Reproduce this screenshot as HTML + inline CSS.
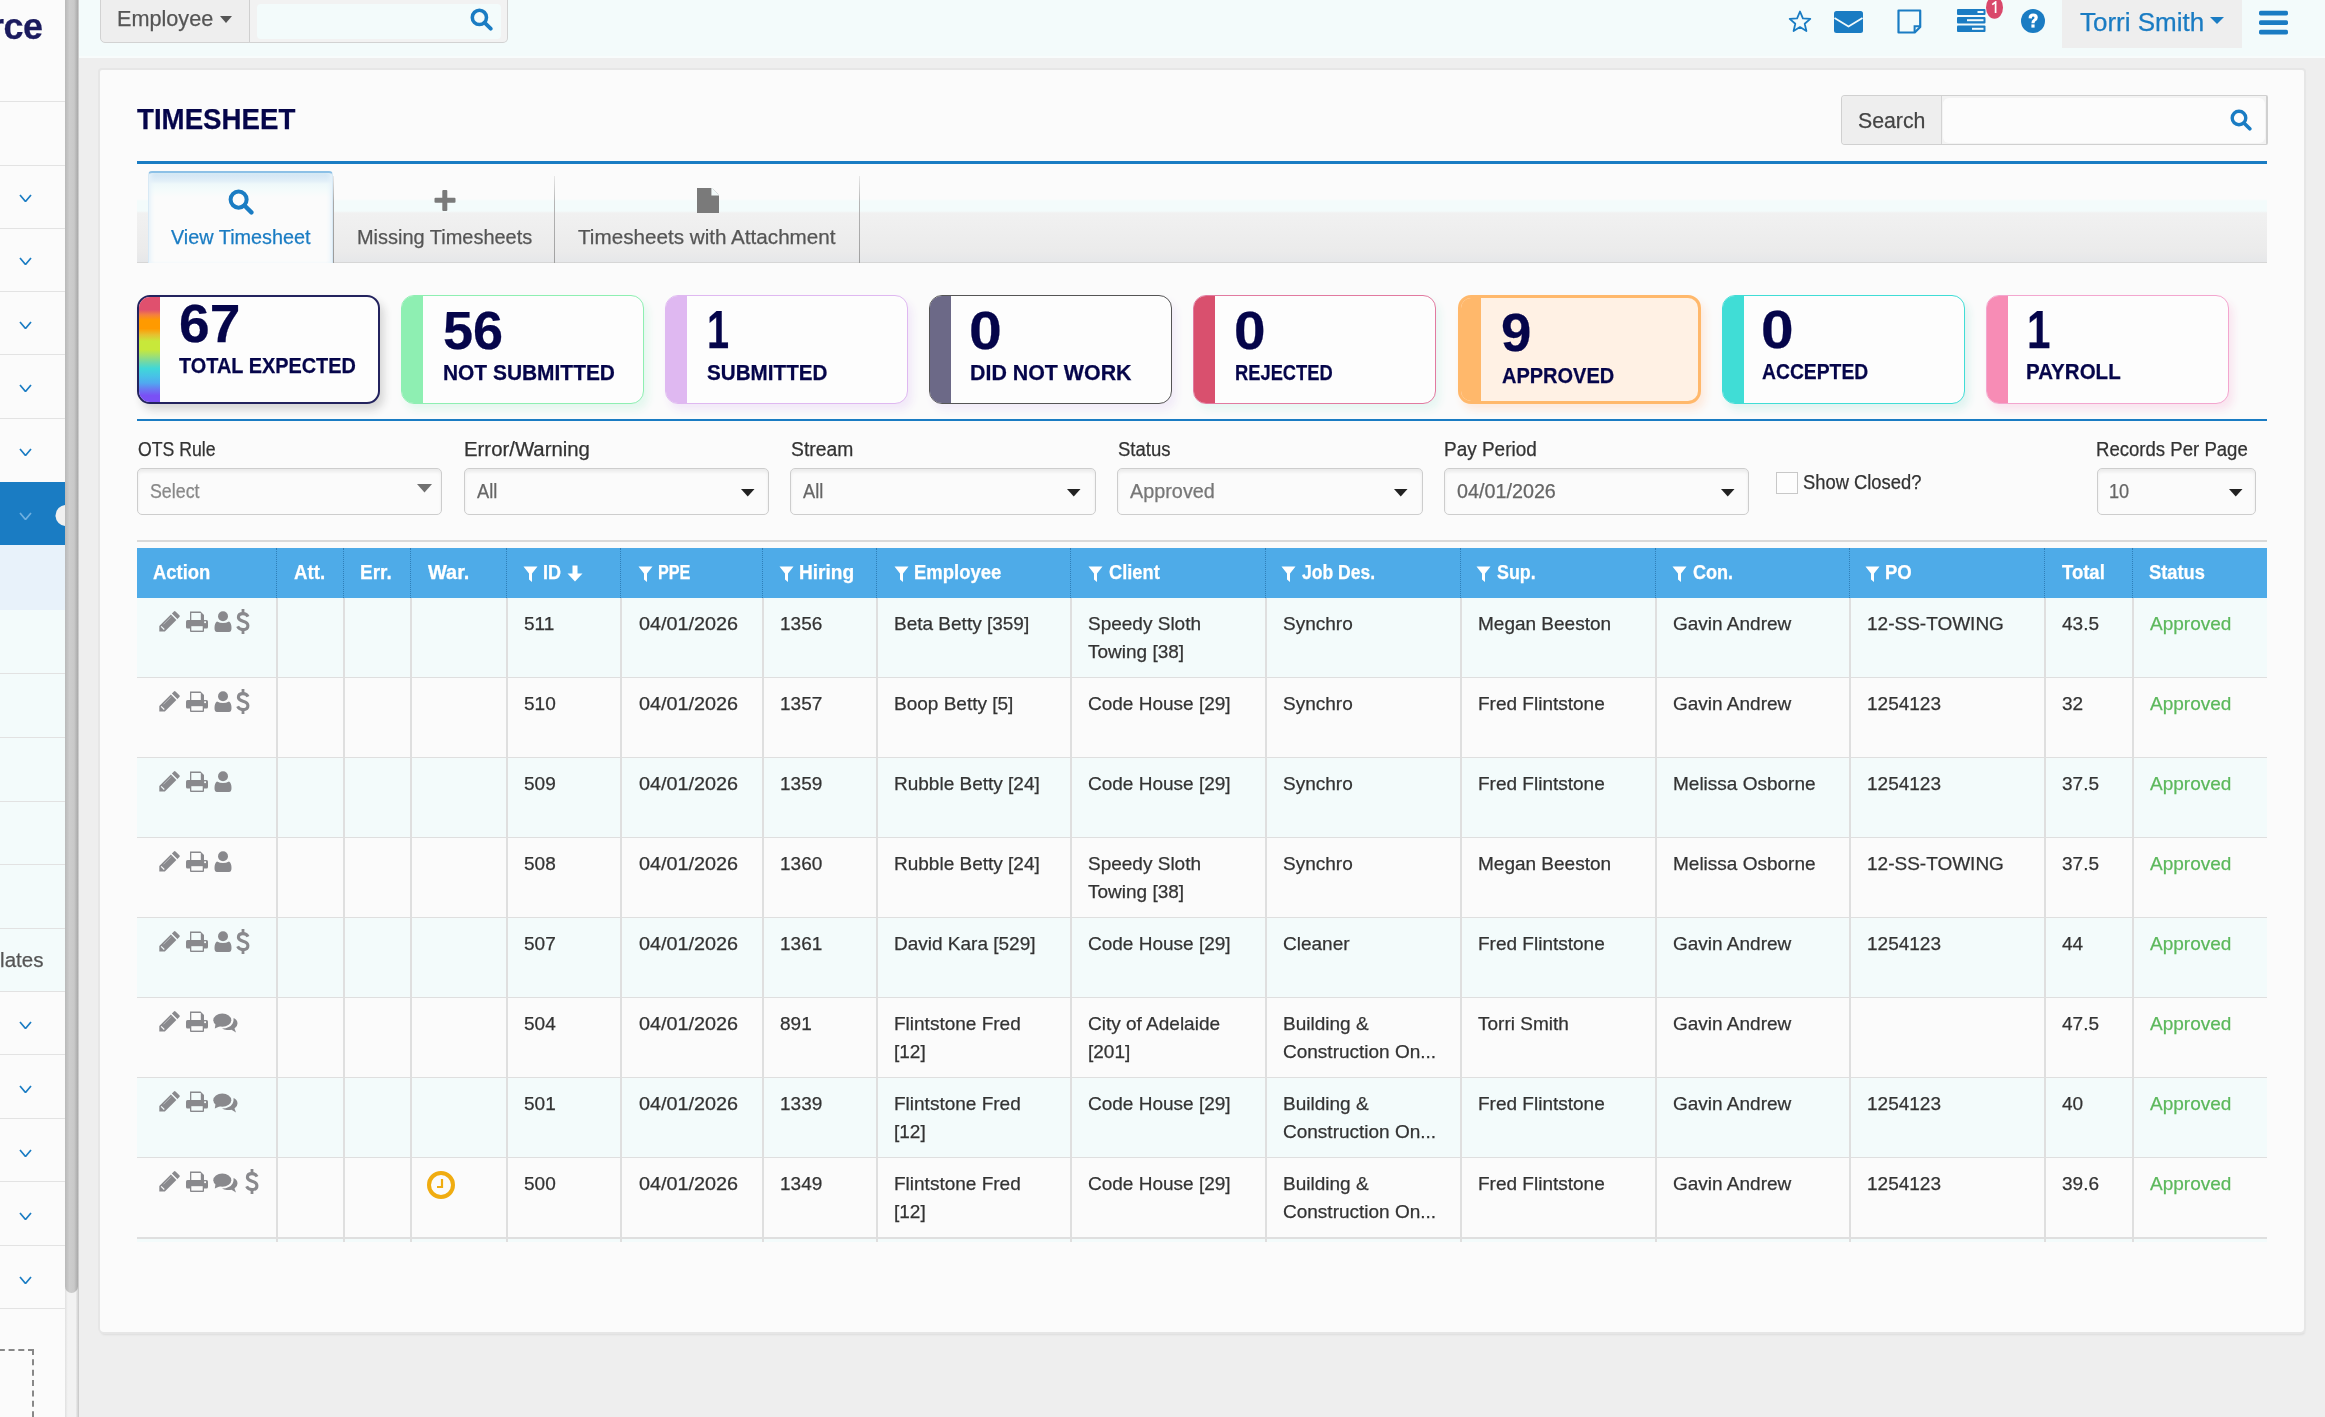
<!DOCTYPE html><html><head><meta charset="utf-8"><style>
html,body{margin:0;padding:0;}
body{width:2325px;height:1417px;overflow:hidden;position:relative;background:#eeeeee;font-family:"Liberation Sans", sans-serif;}
.t{position:absolute;white-space:nowrap;line-height:1;-webkit-text-stroke:0.25px currentColor;}
svg{display:block;}
</style></head><body><div id="w" style="position:absolute;left:0;top:0;width:2325px;height:1417px;will-change:transform;">
<div style="position:absolute;left:0px;top:0px;width:65px;height:1417px;background:#fbfbfb;"></div>
<div class="t" style="left:-10.0px;top:8.5px;font-size:36px;color:#1b1b5e;font-weight:bold;letter-spacing:-0.5px;">rce</div>
<div style="position:absolute;left:0px;top:101px;width:65px;height:1px;background:#e3e3e3;"></div>
<div style="position:absolute;left:0px;top:165px;width:65px;height:1px;background:#e3e3e3;"></div>
<div style="position:absolute;left:0px;top:228px;width:65px;height:1px;background:#e3e3e3;"></div>
<div style="position:absolute;left:0px;top:291px;width:65px;height:1px;background:#e3e3e3;"></div>
<div style="position:absolute;left:0px;top:354px;width:65px;height:1px;background:#e3e3e3;"></div>
<div style="position:absolute;left:0px;top:418px;width:65px;height:1px;background:#e3e3e3;"></div>
<svg style="position:absolute;left:19px;top:193.5px;" width="13" height="8.5" viewBox="-1 -1 13 8.5"><polyline points="0,0 5.5,6.5 11,0" fill="none" stroke="#1a7cc3" stroke-width="1.7"/></svg>
<svg style="position:absolute;left:19px;top:256.5px;" width="13" height="8.5" viewBox="-1 -1 13 8.5"><polyline points="0,0 5.5,6.5 11,0" fill="none" stroke="#1a7cc3" stroke-width="1.7"/></svg>
<svg style="position:absolute;left:19px;top:320.5px;" width="13" height="8.5" viewBox="-1 -1 13 8.5"><polyline points="0,0 5.5,6.5 11,0" fill="none" stroke="#1a7cc3" stroke-width="1.7"/></svg>
<svg style="position:absolute;left:19px;top:383.5px;" width="13" height="8.5" viewBox="-1 -1 13 8.5"><polyline points="0,0 5.5,6.5 11,0" fill="none" stroke="#1a7cc3" stroke-width="1.7"/></svg>
<svg style="position:absolute;left:19px;top:447.5px;" width="13" height="8.5" viewBox="-1 -1 13 8.5"><polyline points="0,0 5.5,6.5 11,0" fill="none" stroke="#1a7cc3" stroke-width="1.7"/></svg>
<div style="position:absolute;left:0px;top:482px;width:65px;height:63px;background:#1a7cc3;"></div>
<svg style="position:absolute;left:19px;top:511.5px;" width="13" height="8.5" viewBox="-1 -1 13 8.5"><polyline points="0,0 5.5,6.5 11,0" fill="none" stroke="#6fb0e0" stroke-width="1.7"/></svg>
<svg style="position:absolute;left:55px;top:505px;" width="10" height="21" viewBox="0 0 10 21"><circle cx="11" cy="10.5" r="10.5" fill="#f0f0f0"/></svg>
<div style="position:absolute;left:0px;top:545px;width:65px;height:65px;background:#e8f2fa;"></div>
<div style="position:absolute;left:0px;top:610px;width:65px;height:382px;background:#f3fbfb;"></div>
<div style="position:absolute;left:0px;top:673px;width:65px;height:1px;background:#e2e2e2;"></div>
<div style="position:absolute;left:0px;top:737px;width:65px;height:1px;background:#e2e2e2;"></div>
<div style="position:absolute;left:0px;top:801px;width:65px;height:1px;background:#e2e2e2;"></div>
<div style="position:absolute;left:0px;top:864px;width:65px;height:1px;background:#e2e2e2;"></div>
<div style="position:absolute;left:0px;top:928px;width:65px;height:1px;background:#e2e2e2;"></div>
<div style="position:absolute;left:0px;top:991px;width:65px;height:1px;background:#e2e2e2;"></div>
<div class="t" style="left:0.1px;top:950.4px;font-size:20.5px;color:#555;font-weight:normal;">lates</div>
<svg style="position:absolute;left:19px;top:1020.5px;" width="13" height="8.5" viewBox="-1 -1 13 8.5"><polyline points="0,0 5.5,6.5 11,0" fill="none" stroke="#1a7cc3" stroke-width="1.7"/></svg>
<svg style="position:absolute;left:19px;top:1084.5px;" width="13" height="8.5" viewBox="-1 -1 13 8.5"><polyline points="0,0 5.5,6.5 11,0" fill="none" stroke="#1a7cc3" stroke-width="1.7"/></svg>
<svg style="position:absolute;left:19px;top:1148.5px;" width="13" height="8.5" viewBox="-1 -1 13 8.5"><polyline points="0,0 5.5,6.5 11,0" fill="none" stroke="#1a7cc3" stroke-width="1.7"/></svg>
<svg style="position:absolute;left:19px;top:1211.5px;" width="13" height="8.5" viewBox="-1 -1 13 8.5"><polyline points="0,0 5.5,6.5 11,0" fill="none" stroke="#1a7cc3" stroke-width="1.7"/></svg>
<svg style="position:absolute;left:19px;top:1275.5px;" width="13" height="8.5" viewBox="-1 -1 13 8.5"><polyline points="0,0 5.5,6.5 11,0" fill="none" stroke="#1a7cc3" stroke-width="1.7"/></svg>
<div style="position:absolute;left:0px;top:1054px;width:65px;height:1px;background:#e3e3e3;"></div>
<div style="position:absolute;left:0px;top:1118px;width:65px;height:1px;background:#e3e3e3;"></div>
<div style="position:absolute;left:0px;top:1181px;width:65px;height:1px;background:#e3e3e3;"></div>
<div style="position:absolute;left:0px;top:1245px;width:65px;height:1px;background:#e3e3e3;"></div>
<div style="position:absolute;left:0px;top:1308px;width:65px;height:1px;background:#e3e3e3;"></div>
<div style="position:absolute;left:-40px;top:1349px;width:74px;height:120px;border-top:2px dashed #888;border-right:2px dashed #888;box-sizing:border-box;"></div>
<div style="position:absolute;left:65px;top:0px;width:14px;height:1417px;background:linear-gradient(90deg,#e0e0e0,#f2f2f2 20%,#f2f2f2 75%,#c6c6c6);"></div>
<div style="position:absolute;left:65px;top:0px;width:13px;height:1293px;background:linear-gradient(90deg,#b9b9b9,#cdcdcd 35%,#c9c9c9 70%,#a9a9a9);border-radius:0 0 7px 7px;"></div>
<div style="position:absolute;left:79px;top:0px;width:2246px;height:58px;background:#f3fbfb;border-bottom:2px solid #f8fcfc;box-sizing:border-box;"></div>
<div style="position:absolute;left:100px;top:-6px;width:150px;height:49px;background:#eeeeee;border:1px solid #d2d2d2;border-radius:0 0 0 5px;box-sizing:border-box;"></div>
<div class="t" style="left:116.7px;top:8.4px;font-size:22px;color:#555;font-weight:normal;transform:scaleX(0.9835);transform-origin:0 0;">Employee</div>
<svg style="position:absolute;left:220px;top:16px;" width="12" height="7" viewBox="0 0 12 7"><polygon points="0,0 12,0 6.0,7" fill="#555"/></svg>
<div style="position:absolute;left:249px;top:-6px;width:259px;height:49px;background:#f2f2f2;border:1px solid #d2d2d2;border-left:1px solid #cfcfcf;border-radius:0 0 5px 0;box-sizing:border-box;"></div>
<div style="position:absolute;left:257px;top:4px;width:244px;height:35px;background:#f3fbfb;border-radius:4px;"></div>
<svg style="position:absolute;left:470px;top:8px;" width="23" height="23" viewBox="0 0 24 24"><circle cx="9.8" cy="9.8" r="7.4" fill="none" stroke="#1a7cc3" stroke-width="3.7"/><line x1="15.2" y1="15.2" x2="21.6" y2="21.6" stroke="#1a7cc3" stroke-width="4" stroke-linecap="round"/></svg>
<svg style="position:absolute;left:1788px;top:10px;" width="24" height="23" viewBox="0 0 24 23"><path d="M12 1.5 L14.9 8.3 L22.3 8.9 L16.7 13.7 L18.4 21 L12 17.1 L5.6 21 L7.3 13.7 L1.7 8.9 L9.1 8.3 Z" fill="none" stroke="#1a7cc3" stroke-width="1.8" stroke-linejoin="round"/></svg>
<svg style="position:absolute;left:1834px;top:11px;" width="29" height="22" viewBox="0 0 29 22"><rect x="0" y="0" width="29" height="22" rx="2.5" fill="#1a7cc3"/><polyline points="0.5,7 14.5,15.5 28.5,7" fill="none" stroke="#f3fbfb" stroke-width="1.8"/></svg>
<svg style="position:absolute;left:1897px;top:8.5px;" width="26" height="25" viewBox="0 0 26 25"><path d="M1.5 1.5 H23.2 V18 L17.7 23.5 H1.5 Z" fill="none" stroke="#1a7cc3" stroke-width="2.2" stroke-linejoin="round"/><path d="M23.2 17.3 H17.6 V23.5" fill="none" stroke="#1a7cc3" stroke-width="2"/></svg>
<svg style="position:absolute;left:1957px;top:9px;" width="29" height="23" viewBox="0 0 29 23"><g fill="#1a7cc3"><rect x="0" y="0" width="28.5" height="6" rx="1"/><rect x="0" y="8" width="28.5" height="6.5" rx="1"/><rect x="0" y="16.5" width="28.5" height="6.5" rx="1"/></g><g fill="#f3fbfb"><rect x="20.5" y="2" width="6" height="2"/><rect x="10" y="10.2" width="16.5" height="2"/><rect x="15" y="18.8" width="11.5" height="2"/></g></svg>
<svg style="position:absolute;left:1985px;top:-4px;" width="19" height="23" viewBox="0 0 19 23"><ellipse cx="9.5" cy="11.5" rx="8.5" ry="11.3" fill="#d9486b"/></svg>
<svg style="position:absolute;left:1990px;top:1px;" width="10" height="13" viewBox="0 0 10 13"><path d="M2.2 3.6 L5.6 1 V12" fill="none" stroke="#fff" stroke-width="1.7"/></svg>
<svg style="position:absolute;left:2021px;top:9px;" width="24" height="24" viewBox="0 0 24 24"><circle cx="12" cy="12" r="12" fill="#1a7cc3"/><path d="M7.6 9.2 Q7.6 4.6 12.2 4.6 Q16.8 4.6 16.8 8.6 Q16.8 11 14.4 12.2 Q13.6 12.7 13.6 14.2 H10.4 Q10.4 11.2 12.4 10.2 Q13.5 9.6 13.5 8.7 Q13.5 7.5 12 7.5 Q10.8 7.5 10.8 9.4 Z" fill="#fff"/><rect x="10.4" y="15.4" width="3.2" height="3.2" fill="#fff"/></svg>
<div style="position:absolute;left:2062px;top:0px;width:180px;height:48px;background:#eeeeee;"></div>
<div class="t" style="left:2080.0px;top:8.8px;font-size:26px;color:#1a7cc3;font-weight:normal;">Torri Smith</div>
<svg style="position:absolute;left:2210px;top:17px;" width="14" height="7" viewBox="0 0 14 7"><polygon points="0,0 14,0 7.0,7" fill="#1a7cc3"/></svg>
<svg style="position:absolute;left:2259px;top:10px;" width="30" height="25" viewBox="0 0 30 25"><g fill="#1a7cc3"><rect x="0" y="0.8" width="29" height="4.6" rx="1.6"/><rect x="0" y="10.3" width="29" height="4.6" rx="1.6"/><rect x="0" y="19.8" width="29" height="4.6" rx="1.6"/></g></svg>
<div style="position:absolute;left:100px;top:70px;width:2204px;height:1262px;background:#fbfbfb;border-radius:2px 2px 4px 4px;box-shadow:0 0 0 2px #e6e6e6, 1px 3px 2px #dcdcdc;"></div>
<div class="t" style="left:137.3px;top:103.6px;font-size:30px;color:#05054a;font-weight:bold;transform:scaleX(0.9221);transform-origin:0 0;">TIMESHEET</div>
<div style="position:absolute;left:1841px;top:95px;width:427px;height:50px;border:1.5px solid #d0d0d0;border-right:2px solid #d0d0d0;border-radius:4px 2px 2px 4px;box-sizing:border-box;background:#f3f3f3;"></div>
<div style="position:absolute;left:1943px;top:98px;width:322px;height:45px;background:#fcfcfc;border-radius:6px;"></div>
<div style="position:absolute;left:1842px;top:96px;width:99px;height:48px;background:#eeeeee;border-right:1px solid #d4d4d4;border-radius:3px 0 0 3px;"></div>
<div class="t" style="left:1857.8px;top:109.5px;font-size:22.5px;color:#444;font-weight:normal;transform:scaleX(0.9459);transform-origin:0 0;">Search</div>
<svg style="position:absolute;left:2230px;top:109px;" width="22" height="22" viewBox="0 0 24 24"><circle cx="9.8" cy="9.8" r="7.4" fill="none" stroke="#1a7cc3" stroke-width="3.7"/><line x1="15.2" y1="15.2" x2="21.6" y2="21.6" stroke="#1a7cc3" stroke-width="4" stroke-linecap="round"/></svg>
<div style="position:absolute;left:137px;top:161px;width:2130px;height:3px;background:#1a7cc3;"></div>
<div style="position:absolute;left:137px;top:171px;width:2130px;height:92px;background:linear-gradient(180deg,#fbfbfb 0px,#fbfbfb 28px,#f3fbfb 30px,#f3fbfb 40px,#f1f1f1 42px,#ebebeb 80px,#e6e7e9 91px);border-bottom:1px solid #d6d6d6;box-sizing:border-box;"></div>
<div style="position:absolute;left:148px;top:171px;width:185px;height:92px;background:linear-gradient(180deg,#d0e4f3 0px,#e2eff8 8px,#eef8fa 11px,#f3fbfb 16px,#fbfbfb 24px,#fbfbfb 100%);border:1px solid #d8e9f5;border-top:2px solid #8cc0e6;border-bottom:none;border-radius:4px 4px 0 0;box-sizing:border-box;box-shadow:inset 4px 0 4px -2px #e6f2fa, inset -4px 0 4px -2px #e6f2fa;"></div>
<svg style="position:absolute;left:228px;top:189px;" width="26" height="26" viewBox="0 0 24 24"><circle cx="9.8" cy="9.8" r="7.4" fill="none" stroke="#1a7cc3" stroke-width="3.7"/><line x1="15.2" y1="15.2" x2="21.6" y2="21.6" stroke="#1a7cc3" stroke-width="4" stroke-linecap="round"/></svg>
<div class="t" style="left:170.6px;top:227.3px;font-size:20px;color:#1a7cc3;font-weight:normal;transform:scaleX(0.9914);transform-origin:0 0;">View Timesheet</div>
<div style="position:absolute;left:333px;top:176px;width:1px;height:87px;background:linear-gradient(180deg,#e8e8e8,#a9a9a9 30%,#9a9a9a);"></div>
<svg style="position:absolute;left:434px;top:190px;" width="22" height="21" viewBox="0 0 22 21"><rect x="8.3" y="0" width="5" height="21" rx="1" fill="#7a7a7a"/><rect x="0.5" y="7.8" width="21" height="5" rx="1" fill="#7a7a7a"/></svg>
<div class="t" style="left:357.0px;top:227.3px;font-size:20px;color:#555;font-weight:normal;transform:scaleX(0.9978);transform-origin:0 0;">Missing Timesheets</div>
<div style="position:absolute;left:554px;top:176px;width:1px;height:87px;background:linear-gradient(180deg,#e8e8e8,#b5b5b5 30%,#a0a0a0);"></div>
<svg style="position:absolute;left:696px;top:187px;" width="24" height="27" viewBox="0 0 24 27"><path d="M1 1 H16 L23 8 V26 H1 Z" fill="#7a7a7a"/><path d="M16 1 V8 H23" fill="#f3fbfb" stroke="#f3fbfb" stroke-width="1.2"/></svg>
<div class="t" style="left:578.0px;top:226.8px;font-size:20.5px;color:#555;font-weight:normal;transform:scaleX(1.0076);transform-origin:0 0;">Timesheets with Attachment</div>
<div style="position:absolute;left:859px;top:176px;width:1px;height:87px;background:linear-gradient(180deg,#e8e8e8,#b5b5b5 30%,#a0a0a0);"></div>
<div style="position:absolute;left:137px;top:295px;width:243px;height:109px;box-sizing:border-box;border:2px solid #23235e;border-radius:13px;background:#fdfdfd;overflow:hidden;box-shadow:4px 6px 8px #d6d6d6;"><div style="position:absolute;left:0;top:0;bottom:0;width:21px;background:linear-gradient(180deg,#e0506e 0%,#e0506e 12%,#f48040 17%,#ff9a00 22%,#ff9a00 30%,#e6c030 36%,#c8e83a 42%,#c8e83a 50%,#a0e070 56%,#70d8a8 62%,#40d8d8 68%,#48c0e8 76%,#50a8f0 82%,#6a78f2 88%,#7a50f5 94%,#7a50f5 100%);"></div></div>
<div class="t" style="left:178.8px;top:295.6px;font-size:54px;color:#05054a;font-weight:bold;transform:scaleX(1.0205);transform-origin:0 0;">67</div>
<div class="t" style="left:179.2px;top:355.4px;font-size:22.5px;color:#05054a;font-weight:bold;transform:scaleX(0.8842);transform-origin:0 0;">TOTAL EXPECTED</div>
<div style="position:absolute;left:400.5px;top:295px;width:243px;height:109px;box-sizing:border-box;border:1.5px solid #8eefb2;border-radius:13px;background:#fdfdfd;overflow:hidden;box-shadow:4px 6px 8px #e3f7ee;"><div style="position:absolute;left:0;top:0;bottom:0;width:21px;background:#8eefb2;"></div></div>
<div class="t" style="left:443.0px;top:302.8px;font-size:54px;color:#05054a;font-weight:bold;">56</div>
<div class="t" style="left:443.1px;top:361.6px;font-size:22.5px;color:#05054a;font-weight:bold;transform:scaleX(0.9296);transform-origin:0 0;">NOT SUBMITTED</div>
<div style="position:absolute;left:664.5px;top:295px;width:243px;height:109px;box-sizing:border-box;border:1.5px solid #dfb8f1;border-radius:13px;background:#fdfdfd;overflow:hidden;box-shadow:4px 6px 8px #f1e8f8;"><div style="position:absolute;left:0;top:0;bottom:0;width:21px;background:#dfb8f1;"></div></div>
<div class="t" style="left:707.4px;top:302.2px;font-size:54px;color:#05054a;font-weight:bold;transform:scaleX(0.7346);transform-origin:0 0;">1</div>
<div class="t" style="left:706.7px;top:361.7px;font-size:22.5px;color:#05054a;font-weight:bold;transform:scaleX(0.9176);transform-origin:0 0;">SUBMITTED</div>
<div style="position:absolute;left:928.5px;top:295px;width:243px;height:109px;box-sizing:border-box;border:1.5px solid #555555;border-radius:13px;background:#fdfdfd;overflow:hidden;box-shadow:4px 6px 8px #f1ebf8;"><div style="position:absolute;left:0;top:0;bottom:0;width:21px;background:#6c6987;"></div></div>
<div class="t" style="left:968.8px;top:302.8px;font-size:54px;color:#05054a;font-weight:bold;transform:scaleX(1.0923);transform-origin:0 0;">0</div>
<div class="t" style="left:970.0px;top:361.6px;font-size:22.5px;color:#05054a;font-weight:bold;transform:scaleX(0.9503);transform-origin:0 0;">DID NOT WORK</div>
<div style="position:absolute;left:1193px;top:295px;width:243px;height:109px;box-sizing:border-box;border:1.5px solid #e27aa0;border-radius:13px;background:#fdfdfd;overflow:hidden;box-shadow:4px 6px 8px #e6f6f2;"><div style="position:absolute;left:0;top:0;bottom:0;width:21px;background:#d9506e;"></div></div>
<div class="t" style="left:1233.8px;top:302.8px;font-size:54px;color:#05054a;font-weight:bold;transform:scaleX(1.0500);transform-origin:0 0;">0</div>
<div class="t" style="left:1234.5px;top:361.6px;font-size:22.5px;color:#05054a;font-weight:bold;transform:scaleX(0.8141);transform-origin:0 0;">REJECTED</div>
<div style="position:absolute;left:1457.5px;top:295px;width:243px;height:109px;box-sizing:border-box;border:3.5px solid #ffb86b;border-radius:13px;background:#fff1e4;overflow:hidden;box-shadow:4px 6px 8px #fde9dc;"><div style="position:absolute;left:0;top:0;bottom:0;width:20px;background:#ffb86b;"></div></div>
<div class="t" style="left:1500.7px;top:305.4px;font-size:54px;color:#05054a;font-weight:bold;transform:scaleX(1.0107);transform-origin:0 0;">9</div>
<div class="t" style="left:1501.7px;top:364.6px;font-size:22.5px;color:#05054a;font-weight:bold;transform:scaleX(0.8887);transform-origin:0 0;">APPROVED</div>
<div style="position:absolute;left:1721.5px;top:295px;width:243px;height:109px;box-sizing:border-box;border:1.5px solid #40ddd6;border-radius:13px;background:#fdfdfd;overflow:hidden;box-shadow:4px 6px 8px #dff3f0;"><div style="position:absolute;left:0;top:0;bottom:0;width:21px;background:#40ddd6;"></div></div>
<div class="t" style="left:1760.6px;top:302.2px;font-size:54px;color:#05054a;font-weight:bold;transform:scaleX(1.0846);transform-origin:0 0;">0</div>
<div class="t" style="left:1762.4px;top:361.4px;font-size:22.5px;color:#05054a;font-weight:bold;transform:scaleX(0.8582);transform-origin:0 0;">ACCEPTED</div>
<div style="position:absolute;left:1985.5px;top:295px;width:243px;height:109px;box-sizing:border-box;border:1.5px solid #f3a6cf;border-radius:13px;background:#fdfdfd;overflow:hidden;box-shadow:4px 6px 8px #f9e3ee;"><div style="position:absolute;left:0;top:0;bottom:0;width:21px;background:#f78cb5;"></div></div>
<div class="t" style="left:2026.6px;top:302.2px;font-size:54px;color:#05054a;font-weight:bold;transform:scaleX(0.7808);transform-origin:0 0;">1</div>
<div class="t" style="left:2026.4px;top:361.4px;font-size:22.5px;color:#05054a;font-weight:bold;transform:scaleX(0.9124);transform-origin:0 0;">PAYROLL</div>
<div style="position:absolute;left:137px;top:418.5px;width:2130px;height:2.5px;background:#1a7cc3;"></div>
<div class="t" style="left:137.8px;top:439.5px;font-size:19.5px;color:#333;font-weight:normal;transform:scaleX(0.9049);transform-origin:0 0;">OTS Rule</div>
<div style="position:absolute;left:137px;top:468px;width:305px;height:47px;border:1.5px solid #cdcdcd;border-radius:5px;box-sizing:border-box;background:#fbfbfb;box-shadow:inset 0 3px 3px #ececec;"></div>
<div class="t" style="left:149.5px;top:482.1px;font-size:19.5px;color:#888;font-weight:normal;transform:scaleX(0.9128);transform-origin:0 0;">Select</div>
<svg style="position:absolute;left:417px;top:484px;" width="15" height="8.5" viewBox="0 0 15 8.5"><polygon points="0,0 15,0 7.5,8.5" fill="#707070"/></svg>
<div class="t" style="left:463.8px;top:439.5px;font-size:19.5px;color:#333;font-weight:normal;transform:scaleX(1.0438);transform-origin:0 0;">Error/Warning</div>
<div style="position:absolute;left:464px;top:468px;width:305px;height:47px;border:1.5px solid #cdcdcd;border-radius:5px;box-sizing:border-box;background:#fbfbfb;box-shadow:inset 0 3px 3px #ececec;"></div>
<div class="t" style="left:476.5px;top:482.1px;font-size:19.5px;color:#666;font-weight:normal;transform:scaleX(0.9373);transform-origin:0 0;">All</div>
<svg style="position:absolute;left:741px;top:489px;" width="13.5" height="7.5" viewBox="0 0 13.5 7.5"><polygon points="0,0 13.5,0 6.75,7.5" fill="#222"/></svg>
<div class="t" style="left:790.8px;top:439.5px;font-size:19.5px;color:#333;font-weight:normal;transform:scaleX(0.9901);transform-origin:0 0;">Stream</div>
<div style="position:absolute;left:790px;top:468px;width:306px;height:47px;border:1.5px solid #cdcdcd;border-radius:5px;box-sizing:border-box;background:#fbfbfb;box-shadow:inset 0 3px 3px #ececec;"></div>
<div class="t" style="left:802.5px;top:482.1px;font-size:19.5px;color:#666;font-weight:normal;transform:scaleX(0.9373);transform-origin:0 0;">All</div>
<svg style="position:absolute;left:1067px;top:489px;" width="13.5" height="7.5" viewBox="0 0 13.5 7.5"><polygon points="0,0 13.5,0 6.75,7.5" fill="#222"/></svg>
<div class="t" style="left:1117.8px;top:439.5px;font-size:19.5px;color:#333;font-weight:normal;transform:scaleX(0.9490);transform-origin:0 0;">Status</div>
<div style="position:absolute;left:1117px;top:468px;width:306px;height:47px;border:1.5px solid #cdcdcd;border-radius:5px;box-sizing:border-box;background:#fbfbfb;box-shadow:inset 0 3px 3px #ececec;"></div>
<div class="t" style="left:1129.5px;top:482.1px;font-size:19.5px;color:#777;font-weight:normal;transform:scaleX(1.0166);transform-origin:0 0;">Approved</div>
<svg style="position:absolute;left:1394px;top:489px;" width="13.5" height="7.5" viewBox="0 0 13.5 7.5"><polygon points="0,0 13.5,0 6.75,7.5" fill="#222"/></svg>
<div class="t" style="left:1443.8px;top:439.5px;font-size:19.5px;color:#333;font-weight:normal;transform:scaleX(0.9728);transform-origin:0 0;">Pay Period</div>
<div style="position:absolute;left:1444px;top:468px;width:305px;height:47px;border:1.5px solid #cdcdcd;border-radius:5px;box-sizing:border-box;background:#fbfbfb;box-shadow:inset 0 3px 3px #ececec;"></div>
<div class="t" style="left:1456.5px;top:482.1px;font-size:19.5px;color:#666;font-weight:normal;transform:scaleX(1.0129);transform-origin:0 0;">04/01/2026</div>
<svg style="position:absolute;left:1721px;top:489px;" width="13.5" height="7.5" viewBox="0 0 13.5 7.5"><polygon points="0,0 13.5,0 6.75,7.5" fill="#222"/></svg>
<div style="position:absolute;left:1776px;top:472px;width:22px;height:22px;border:1px solid #c8c8c8;box-sizing:border-box;background:#fdfdfd;"></div>
<div class="t" style="left:1802.5px;top:473.0px;font-size:19.5px;color:#333;font-weight:normal;transform:scaleX(0.9413);transform-origin:0 0;">Show Closed?</div>
<div class="t" style="left:2096.3px;top:439.5px;font-size:19.5px;color:#333;font-weight:normal;transform:scaleX(0.9525);transform-origin:0 0;">Records Per Page</div>
<div style="position:absolute;left:2097px;top:468px;width:159px;height:47px;border:1.5px solid #cdcdcd;border-radius:5px;box-sizing:border-box;background:#fbfbfb;box-shadow:inset 0 3px 3px #ececec;"></div>
<div class="t" style="left:2109.1px;top:482.0px;font-size:19.5px;color:#666;font-weight:normal;transform:scaleX(0.9307);transform-origin:0 0;">10</div>
<svg style="position:absolute;left:2229px;top:489px;" width="13.5" height="7.5" viewBox="0 0 13.5 7.5"><polygon points="0,0 13.5,0 6.75,7.5" fill="#222"/></svg>
<div style="position:absolute;left:137px;top:540px;width:2130px;height:1.5px;background:#d9d9d9;"></div>
<div style="position:absolute;left:137px;top:548px;width:2130px;height:50px;background:#4eabe8;"></div>
<div style="position:absolute;left:276px;top:548px;width:1px;height:50px;border-left:1px dotted #2f7fb8;box-sizing:border-box;"></div>
<div style="position:absolute;left:343px;top:548px;width:1px;height:50px;border-left:1px dotted #2f7fb8;box-sizing:border-box;"></div>
<div style="position:absolute;left:410px;top:548px;width:1px;height:50px;border-left:1px dotted #2f7fb8;box-sizing:border-box;"></div>
<div style="position:absolute;left:506px;top:548px;width:1px;height:50px;border-left:1px dotted #2f7fb8;box-sizing:border-box;"></div>
<div style="position:absolute;left:620px;top:548px;width:1px;height:50px;border-left:1px dotted #2f7fb8;box-sizing:border-box;"></div>
<div style="position:absolute;left:762px;top:548px;width:1px;height:50px;border-left:1px dotted #2f7fb8;box-sizing:border-box;"></div>
<div style="position:absolute;left:876px;top:548px;width:1px;height:50px;border-left:1px dotted #2f7fb8;box-sizing:border-box;"></div>
<div style="position:absolute;left:1070px;top:548px;width:1px;height:50px;border-left:1px dotted #2f7fb8;box-sizing:border-box;"></div>
<div style="position:absolute;left:1265px;top:548px;width:1px;height:50px;border-left:1px dotted #2f7fb8;box-sizing:border-box;"></div>
<div style="position:absolute;left:1460px;top:548px;width:1px;height:50px;border-left:1px dotted #2f7fb8;box-sizing:border-box;"></div>
<div style="position:absolute;left:1655px;top:548px;width:1px;height:50px;border-left:1px dotted #2f7fb8;box-sizing:border-box;"></div>
<div style="position:absolute;left:1849px;top:548px;width:1px;height:50px;border-left:1px dotted #2f7fb8;box-sizing:border-box;"></div>
<div style="position:absolute;left:2044px;top:548px;width:1px;height:50px;border-left:1px dotted #2f7fb8;box-sizing:border-box;"></div>
<div style="position:absolute;left:2132px;top:548px;width:1px;height:50px;border-left:1px dotted #2f7fb8;box-sizing:border-box;"></div>
<div class="t" style="left:153.2px;top:563.3px;font-size:19.5px;color:#fff;font-weight:bold;transform:scaleX(0.9439);transform-origin:0 0;">Action</div>
<div class="t" style="left:293.9px;top:563.3px;font-size:19.5px;color:#fff;font-weight:bold;transform:scaleX(0.9573);transform-origin:0 0;">Att.</div>
<div class="t" style="left:360.0px;top:563.3px;font-size:19.5px;color:#fff;font-weight:bold;transform:scaleX(0.9740);transform-origin:0 0;">Err.</div>
<div class="t" style="left:427.8px;top:563.3px;font-size:19.5px;color:#fff;font-weight:bold;transform:scaleX(1.0215);transform-origin:0 0;">War.</div>
<svg style="position:absolute;left:523px;top:565.5px;" width="15" height="17" viewBox="0 0 15 17"><path d="M0.5 0.5 H14.5 L9 7.5 V16 L6 13.5 V7.5 Z" fill="#fff"/></svg>
<svg style="position:absolute;left:566px;top:565px;" width="18" height="17" viewBox="0 0 18 17"><path d="M6.5 0.5 H11.5 V8.5 H16.5 L9 16.5 L1.5 8.5 H6.5 Z" fill="#fff"/></svg>
<div class="t" style="left:543.1px;top:563.3px;font-size:19.5px;color:#fff;font-weight:bold;transform:scaleX(0.9230);transform-origin:0 0;">ID</div>
<svg style="position:absolute;left:637.7px;top:565.5px;" width="15" height="17" viewBox="0 0 15 17"><path d="M0.5 0.5 H14.5 L9 7.5 V16 L6 13.5 V7.5 Z" fill="#fff"/></svg>
<div class="t" style="left:657.9px;top:563.3px;font-size:19.5px;color:#fff;font-weight:bold;transform:scaleX(0.8313);transform-origin:0 0;">PPE</div>
<svg style="position:absolute;left:779.2px;top:565.5px;" width="15" height="17" viewBox="0 0 15 17"><path d="M0.5 0.5 H14.5 L9 7.5 V16 L6 13.5 V7.5 Z" fill="#fff"/></svg>
<div class="t" style="left:799.2px;top:563.3px;font-size:19.5px;color:#fff;font-weight:bold;transform:scaleX(0.9795);transform-origin:0 0;">Hiring</div>
<svg style="position:absolute;left:893.7px;top:565.5px;" width="15" height="17" viewBox="0 0 15 17"><path d="M0.5 0.5 H14.5 L9 7.5 V16 L6 13.5 V7.5 Z" fill="#fff"/></svg>
<div class="t" style="left:913.8px;top:563.3px;font-size:19.5px;color:#fff;font-weight:bold;transform:scaleX(0.9466);transform-origin:0 0;">Employee</div>
<svg style="position:absolute;left:1087.9px;top:565.5px;" width="15" height="17" viewBox="0 0 15 17"><path d="M0.5 0.5 H14.5 L9 7.5 V16 L6 13.5 V7.5 Z" fill="#fff"/></svg>
<div class="t" style="left:1108.9px;top:563.3px;font-size:19.5px;color:#fff;font-weight:bold;transform:scaleX(0.9365);transform-origin:0 0;">Client</div>
<svg style="position:absolute;left:1280.7px;top:565.5px;" width="15" height="17" viewBox="0 0 15 17"><path d="M0.5 0.5 H14.5 L9 7.5 V16 L6 13.5 V7.5 Z" fill="#fff"/></svg>
<div class="t" style="left:1301.7px;top:563.3px;font-size:19.5px;color:#fff;font-weight:bold;transform:scaleX(0.8991);transform-origin:0 0;">Job Des.</div>
<svg style="position:absolute;left:1476.4px;top:565.5px;" width="15" height="17" viewBox="0 0 15 17"><path d="M0.5 0.5 H14.5 L9 7.5 V16 L6 13.5 V7.5 Z" fill="#fff"/></svg>
<div class="t" style="left:1497.4px;top:563.3px;font-size:19.5px;color:#fff;font-weight:bold;transform:scaleX(0.9156);transform-origin:0 0;">Sup.</div>
<svg style="position:absolute;left:1671.6px;top:565.5px;" width="15" height="17" viewBox="0 0 15 17"><path d="M0.5 0.5 H14.5 L9 7.5 V16 L6 13.5 V7.5 Z" fill="#fff"/></svg>
<div class="t" style="left:1692.6px;top:563.3px;font-size:19.5px;color:#fff;font-weight:bold;transform:scaleX(0.9253);transform-origin:0 0;">Con.</div>
<svg style="position:absolute;left:1865.2px;top:565.5px;" width="15" height="17" viewBox="0 0 15 17"><path d="M0.5 0.5 H14.5 L9 7.5 V16 L6 13.5 V7.5 Z" fill="#fff"/></svg>
<div class="t" style="left:1885.3px;top:563.3px;font-size:19.5px;color:#fff;font-weight:bold;transform:scaleX(0.9479);transform-origin:0 0;">PO</div>
<div class="t" style="left:2062.1px;top:563.3px;font-size:19.5px;color:#fff;font-weight:bold;transform:scaleX(0.9482);transform-origin:0 0;">Total</div>
<div class="t" style="left:2149.4px;top:563.3px;font-size:19.5px;color:#fff;font-weight:bold;transform:scaleX(0.9389);transform-origin:0 0;">Status</div>
<div style="position:absolute;left:137px;top:598px;width:2130px;height:80px;background:#f3fbfb;"></div>
<div style="position:absolute;left:137px;top:677px;width:2130px;height:2px;background:#dfdfdf;"></div>
<svg style="position:absolute;left:158.8px;top:611.4px;" width="22" height="22" viewBox="0 0 22 22"><path d="M0.3 15 L11.9 3.4 L17.4 8.9 L5.8 20.5 L0.3 20.5 Z" fill="#89898d"/><path d="M12.9 2.4 L14.9 0.4 Q15.7 -0.4 16.5 0.4 L20.4 4.3 Q21.2 5.1 20.4 5.9 L18.4 7.9 Z" fill="#89898d"/><line x1="4.4" y1="13.4" x2="12.2" y2="5.6" stroke="#f3fbfb" stroke-width="0.55" opacity="0.75"/><line x1="2.1" y1="15.3" x2="5.3" y2="18.5" stroke="#f3fbfb" stroke-width="1.1"/></svg>
<svg style="position:absolute;left:186px;top:611px;" width="22" height="21" viewBox="0 0 22 21"><g fill="#89898d"><path d="M4 0.5 H14.5 L18 4 V9 H4 Z"/><rect x="0" y="9" width="22" height="8.5" rx="1.5"/><rect x="4" y="14" width="14" height="7" rx="1"/></g><rect x="5.3" y="2" width="9.5" height="7" fill="#f3fbfb"/><rect x="5.3" y="15.2" width="11.4" height="4.4" fill="#f3fbfb"/><rect x="18.2" y="10.3" width="1.8" height="1.8" fill="#f3fbfb"/></svg>
<svg style="position:absolute;left:213.5px;top:610.5px;" width="18" height="21" viewBox="0 0 18 21"><g fill="#89898d"><circle cx="9" cy="5.2" r="5"/><path d="M3 10.5 Q9 13.5 15 10.5 Q17.5 12 17.5 17 Q17.5 21 15 21 H3 Q0.5 21 0.5 17 Q0.5 12 3 10.5 Z"/></g></svg>
<svg style="position:absolute;left:236.2px;top:608.5px;" width="14" height="25" viewBox="0 0 14 25"><path d="M12 7.6 C11 5.4 9.3 4.6 7 4.6 C4.2 4.6 2.4 6 2.4 8.3 C2.4 10.8 4.6 11.5 7 12.2 C9.8 13 11.9 13.9 11.9 16.7 C11.9 19.2 9.8 20.6 7 20.6 C4.6 20.6 2.7 19.6 1.6 17.4" fill="none" stroke="#89898d" stroke-width="3.1"/><rect x="5.6" y="0" width="2.8" height="5" fill="#89898d"/><rect x="5.6" y="20" width="2.8" height="5" fill="#89898d"/></svg>
<div class="t" style="left:524.0px;top:614.2px;font-size:19px;color:#333;font-weight:normal;">511</div>
<div class="t" style="left:638.5px;top:614.2px;font-size:19px;color:#333;font-weight:normal;transform:scaleX(1.0420);transform-origin:0 0;">04/01/2026</div>
<div class="t" style="left:780.0px;top:614.2px;font-size:19px;color:#333;font-weight:normal;">1356</div>
<div class="t" style="left:894.0px;top:614.2px;font-size:19px;color:#333;font-weight:normal;">Beta Betty [359]</div>
<div class="t" style="left:1088.0px;top:614.2px;font-size:19px;color:#333;font-weight:normal;">Speedy Sloth</div>
<div class="t" style="left:1088.0px;top:642.2px;font-size:19px;color:#333;font-weight:normal;">Towing [38]</div>
<div class="t" style="left:1283.0px;top:614.2px;font-size:19px;color:#333;font-weight:normal;">Synchro</div>
<div class="t" style="left:1478.0px;top:614.2px;font-size:19px;color:#333;font-weight:normal;">Megan Beeston</div>
<div class="t" style="left:1673.0px;top:614.2px;font-size:19px;color:#333;font-weight:normal;">Gavin Andrew</div>
<div class="t" style="left:1867.0px;top:614.2px;font-size:19px;color:#333;font-weight:normal;">12-SS-TOWING</div>
<div class="t" style="left:2062.0px;top:614.2px;font-size:19px;color:#333;font-weight:normal;">43.5</div>
<div class="t" style="left:2150.0px;top:614.2px;font-size:19px;color:#5cb85c;font-weight:normal;">Approved</div>
<div style="position:absolute;left:137px;top:678px;width:2130px;height:80px;background:#fbfbfb;"></div>
<div style="position:absolute;left:137px;top:757px;width:2130px;height:2px;background:#dfdfdf;"></div>
<svg style="position:absolute;left:158.8px;top:691.4px;" width="22" height="22" viewBox="0 0 22 22"><path d="M0.3 15 L11.9 3.4 L17.4 8.9 L5.8 20.5 L0.3 20.5 Z" fill="#89898d"/><path d="M12.9 2.4 L14.9 0.4 Q15.7 -0.4 16.5 0.4 L20.4 4.3 Q21.2 5.1 20.4 5.9 L18.4 7.9 Z" fill="#89898d"/><line x1="4.4" y1="13.4" x2="12.2" y2="5.6" stroke="#fbfbfb" stroke-width="0.55" opacity="0.75"/><line x1="2.1" y1="15.3" x2="5.3" y2="18.5" stroke="#fbfbfb" stroke-width="1.1"/></svg>
<svg style="position:absolute;left:186px;top:691px;" width="22" height="21" viewBox="0 0 22 21"><g fill="#89898d"><path d="M4 0.5 H14.5 L18 4 V9 H4 Z"/><rect x="0" y="9" width="22" height="8.5" rx="1.5"/><rect x="4" y="14" width="14" height="7" rx="1"/></g><rect x="5.3" y="2" width="9.5" height="7" fill="#fbfbfb"/><rect x="5.3" y="15.2" width="11.4" height="4.4" fill="#fbfbfb"/><rect x="18.2" y="10.3" width="1.8" height="1.8" fill="#fbfbfb"/></svg>
<svg style="position:absolute;left:213.5px;top:690.5px;" width="18" height="21" viewBox="0 0 18 21"><g fill="#89898d"><circle cx="9" cy="5.2" r="5"/><path d="M3 10.5 Q9 13.5 15 10.5 Q17.5 12 17.5 17 Q17.5 21 15 21 H3 Q0.5 21 0.5 17 Q0.5 12 3 10.5 Z"/></g></svg>
<svg style="position:absolute;left:236.2px;top:688.5px;" width="14" height="25" viewBox="0 0 14 25"><path d="M12 7.6 C11 5.4 9.3 4.6 7 4.6 C4.2 4.6 2.4 6 2.4 8.3 C2.4 10.8 4.6 11.5 7 12.2 C9.8 13 11.9 13.9 11.9 16.7 C11.9 19.2 9.8 20.6 7 20.6 C4.6 20.6 2.7 19.6 1.6 17.4" fill="none" stroke="#89898d" stroke-width="3.1"/><rect x="5.6" y="0" width="2.8" height="5" fill="#89898d"/><rect x="5.6" y="20" width="2.8" height="5" fill="#89898d"/></svg>
<div class="t" style="left:524.0px;top:694.2px;font-size:19px;color:#333;font-weight:normal;">510</div>
<div class="t" style="left:638.5px;top:694.2px;font-size:19px;color:#333;font-weight:normal;transform:scaleX(1.0420);transform-origin:0 0;">04/01/2026</div>
<div class="t" style="left:780.0px;top:694.2px;font-size:19px;color:#333;font-weight:normal;">1357</div>
<div class="t" style="left:894.0px;top:694.2px;font-size:19px;color:#333;font-weight:normal;">Boop Betty [5]</div>
<div class="t" style="left:1088.0px;top:694.2px;font-size:19px;color:#333;font-weight:normal;">Code House [29]</div>
<div class="t" style="left:1283.0px;top:694.2px;font-size:19px;color:#333;font-weight:normal;">Synchro</div>
<div class="t" style="left:1478.0px;top:694.2px;font-size:19px;color:#333;font-weight:normal;">Fred Flintstone</div>
<div class="t" style="left:1673.0px;top:694.2px;font-size:19px;color:#333;font-weight:normal;">Gavin Andrew</div>
<div class="t" style="left:1867.0px;top:694.2px;font-size:19px;color:#333;font-weight:normal;">1254123</div>
<div class="t" style="left:2062.0px;top:694.2px;font-size:19px;color:#333;font-weight:normal;">32</div>
<div class="t" style="left:2150.0px;top:694.2px;font-size:19px;color:#5cb85c;font-weight:normal;">Approved</div>
<div style="position:absolute;left:137px;top:758px;width:2130px;height:80px;background:#f3fbfb;"></div>
<div style="position:absolute;left:137px;top:837px;width:2130px;height:2px;background:#dfdfdf;"></div>
<svg style="position:absolute;left:158.8px;top:771.4px;" width="22" height="22" viewBox="0 0 22 22"><path d="M0.3 15 L11.9 3.4 L17.4 8.9 L5.8 20.5 L0.3 20.5 Z" fill="#89898d"/><path d="M12.9 2.4 L14.9 0.4 Q15.7 -0.4 16.5 0.4 L20.4 4.3 Q21.2 5.1 20.4 5.9 L18.4 7.9 Z" fill="#89898d"/><line x1="4.4" y1="13.4" x2="12.2" y2="5.6" stroke="#f3fbfb" stroke-width="0.55" opacity="0.75"/><line x1="2.1" y1="15.3" x2="5.3" y2="18.5" stroke="#f3fbfb" stroke-width="1.1"/></svg>
<svg style="position:absolute;left:186px;top:771px;" width="22" height="21" viewBox="0 0 22 21"><g fill="#89898d"><path d="M4 0.5 H14.5 L18 4 V9 H4 Z"/><rect x="0" y="9" width="22" height="8.5" rx="1.5"/><rect x="4" y="14" width="14" height="7" rx="1"/></g><rect x="5.3" y="2" width="9.5" height="7" fill="#f3fbfb"/><rect x="5.3" y="15.2" width="11.4" height="4.4" fill="#f3fbfb"/><rect x="18.2" y="10.3" width="1.8" height="1.8" fill="#f3fbfb"/></svg>
<svg style="position:absolute;left:213.5px;top:770.5px;" width="18" height="21" viewBox="0 0 18 21"><g fill="#89898d"><circle cx="9" cy="5.2" r="5"/><path d="M3 10.5 Q9 13.5 15 10.5 Q17.5 12 17.5 17 Q17.5 21 15 21 H3 Q0.5 21 0.5 17 Q0.5 12 3 10.5 Z"/></g></svg>
<div class="t" style="left:524.0px;top:774.2px;font-size:19px;color:#333;font-weight:normal;">509</div>
<div class="t" style="left:638.5px;top:774.2px;font-size:19px;color:#333;font-weight:normal;transform:scaleX(1.0420);transform-origin:0 0;">04/01/2026</div>
<div class="t" style="left:780.0px;top:774.2px;font-size:19px;color:#333;font-weight:normal;">1359</div>
<div class="t" style="left:894.0px;top:774.2px;font-size:19px;color:#333;font-weight:normal;">Rubble Betty [24]</div>
<div class="t" style="left:1088.0px;top:774.2px;font-size:19px;color:#333;font-weight:normal;">Code House [29]</div>
<div class="t" style="left:1283.0px;top:774.2px;font-size:19px;color:#333;font-weight:normal;">Synchro</div>
<div class="t" style="left:1478.0px;top:774.2px;font-size:19px;color:#333;font-weight:normal;">Fred Flintstone</div>
<div class="t" style="left:1673.0px;top:774.2px;font-size:19px;color:#333;font-weight:normal;">Melissa Osborne</div>
<div class="t" style="left:1867.0px;top:774.2px;font-size:19px;color:#333;font-weight:normal;">1254123</div>
<div class="t" style="left:2062.0px;top:774.2px;font-size:19px;color:#333;font-weight:normal;">37.5</div>
<div class="t" style="left:2150.0px;top:774.2px;font-size:19px;color:#5cb85c;font-weight:normal;">Approved</div>
<div style="position:absolute;left:137px;top:838px;width:2130px;height:80px;background:#fbfbfb;"></div>
<div style="position:absolute;left:137px;top:917px;width:2130px;height:2px;background:#dfdfdf;"></div>
<svg style="position:absolute;left:158.8px;top:851.4px;" width="22" height="22" viewBox="0 0 22 22"><path d="M0.3 15 L11.9 3.4 L17.4 8.9 L5.8 20.5 L0.3 20.5 Z" fill="#89898d"/><path d="M12.9 2.4 L14.9 0.4 Q15.7 -0.4 16.5 0.4 L20.4 4.3 Q21.2 5.1 20.4 5.9 L18.4 7.9 Z" fill="#89898d"/><line x1="4.4" y1="13.4" x2="12.2" y2="5.6" stroke="#fbfbfb" stroke-width="0.55" opacity="0.75"/><line x1="2.1" y1="15.3" x2="5.3" y2="18.5" stroke="#fbfbfb" stroke-width="1.1"/></svg>
<svg style="position:absolute;left:186px;top:851px;" width="22" height="21" viewBox="0 0 22 21"><g fill="#89898d"><path d="M4 0.5 H14.5 L18 4 V9 H4 Z"/><rect x="0" y="9" width="22" height="8.5" rx="1.5"/><rect x="4" y="14" width="14" height="7" rx="1"/></g><rect x="5.3" y="2" width="9.5" height="7" fill="#fbfbfb"/><rect x="5.3" y="15.2" width="11.4" height="4.4" fill="#fbfbfb"/><rect x="18.2" y="10.3" width="1.8" height="1.8" fill="#fbfbfb"/></svg>
<svg style="position:absolute;left:213.5px;top:850.5px;" width="18" height="21" viewBox="0 0 18 21"><g fill="#89898d"><circle cx="9" cy="5.2" r="5"/><path d="M3 10.5 Q9 13.5 15 10.5 Q17.5 12 17.5 17 Q17.5 21 15 21 H3 Q0.5 21 0.5 17 Q0.5 12 3 10.5 Z"/></g></svg>
<div class="t" style="left:524.0px;top:854.2px;font-size:19px;color:#333;font-weight:normal;">508</div>
<div class="t" style="left:638.5px;top:854.2px;font-size:19px;color:#333;font-weight:normal;transform:scaleX(1.0420);transform-origin:0 0;">04/01/2026</div>
<div class="t" style="left:780.0px;top:854.2px;font-size:19px;color:#333;font-weight:normal;">1360</div>
<div class="t" style="left:894.0px;top:854.2px;font-size:19px;color:#333;font-weight:normal;">Rubble Betty [24]</div>
<div class="t" style="left:1088.0px;top:854.2px;font-size:19px;color:#333;font-weight:normal;">Speedy Sloth</div>
<div class="t" style="left:1088.0px;top:882.2px;font-size:19px;color:#333;font-weight:normal;">Towing [38]</div>
<div class="t" style="left:1283.0px;top:854.2px;font-size:19px;color:#333;font-weight:normal;">Synchro</div>
<div class="t" style="left:1478.0px;top:854.2px;font-size:19px;color:#333;font-weight:normal;">Megan Beeston</div>
<div class="t" style="left:1673.0px;top:854.2px;font-size:19px;color:#333;font-weight:normal;">Melissa Osborne</div>
<div class="t" style="left:1867.0px;top:854.2px;font-size:19px;color:#333;font-weight:normal;">12-SS-TOWING</div>
<div class="t" style="left:2062.0px;top:854.2px;font-size:19px;color:#333;font-weight:normal;">37.5</div>
<div class="t" style="left:2150.0px;top:854.2px;font-size:19px;color:#5cb85c;font-weight:normal;">Approved</div>
<div style="position:absolute;left:137px;top:918px;width:2130px;height:80px;background:#f3fbfb;"></div>
<div style="position:absolute;left:137px;top:997px;width:2130px;height:2px;background:#dfdfdf;"></div>
<svg style="position:absolute;left:158.8px;top:931.4px;" width="22" height="22" viewBox="0 0 22 22"><path d="M0.3 15 L11.9 3.4 L17.4 8.9 L5.8 20.5 L0.3 20.5 Z" fill="#89898d"/><path d="M12.9 2.4 L14.9 0.4 Q15.7 -0.4 16.5 0.4 L20.4 4.3 Q21.2 5.1 20.4 5.9 L18.4 7.9 Z" fill="#89898d"/><line x1="4.4" y1="13.4" x2="12.2" y2="5.6" stroke="#f3fbfb" stroke-width="0.55" opacity="0.75"/><line x1="2.1" y1="15.3" x2="5.3" y2="18.5" stroke="#f3fbfb" stroke-width="1.1"/></svg>
<svg style="position:absolute;left:186px;top:931px;" width="22" height="21" viewBox="0 0 22 21"><g fill="#89898d"><path d="M4 0.5 H14.5 L18 4 V9 H4 Z"/><rect x="0" y="9" width="22" height="8.5" rx="1.5"/><rect x="4" y="14" width="14" height="7" rx="1"/></g><rect x="5.3" y="2" width="9.5" height="7" fill="#f3fbfb"/><rect x="5.3" y="15.2" width="11.4" height="4.4" fill="#f3fbfb"/><rect x="18.2" y="10.3" width="1.8" height="1.8" fill="#f3fbfb"/></svg>
<svg style="position:absolute;left:213.5px;top:930.5px;" width="18" height="21" viewBox="0 0 18 21"><g fill="#89898d"><circle cx="9" cy="5.2" r="5"/><path d="M3 10.5 Q9 13.5 15 10.5 Q17.5 12 17.5 17 Q17.5 21 15 21 H3 Q0.5 21 0.5 17 Q0.5 12 3 10.5 Z"/></g></svg>
<svg style="position:absolute;left:236.2px;top:928.5px;" width="14" height="25" viewBox="0 0 14 25"><path d="M12 7.6 C11 5.4 9.3 4.6 7 4.6 C4.2 4.6 2.4 6 2.4 8.3 C2.4 10.8 4.6 11.5 7 12.2 C9.8 13 11.9 13.9 11.9 16.7 C11.9 19.2 9.8 20.6 7 20.6 C4.6 20.6 2.7 19.6 1.6 17.4" fill="none" stroke="#89898d" stroke-width="3.1"/><rect x="5.6" y="0" width="2.8" height="5" fill="#89898d"/><rect x="5.6" y="20" width="2.8" height="5" fill="#89898d"/></svg>
<div class="t" style="left:524.0px;top:934.2px;font-size:19px;color:#333;font-weight:normal;">507</div>
<div class="t" style="left:638.5px;top:934.2px;font-size:19px;color:#333;font-weight:normal;transform:scaleX(1.0420);transform-origin:0 0;">04/01/2026</div>
<div class="t" style="left:780.0px;top:934.2px;font-size:19px;color:#333;font-weight:normal;">1361</div>
<div class="t" style="left:894.0px;top:934.2px;font-size:19px;color:#333;font-weight:normal;">David Kara [529]</div>
<div class="t" style="left:1088.0px;top:934.2px;font-size:19px;color:#333;font-weight:normal;">Code House [29]</div>
<div class="t" style="left:1283.0px;top:934.2px;font-size:19px;color:#333;font-weight:normal;">Cleaner</div>
<div class="t" style="left:1478.0px;top:934.2px;font-size:19px;color:#333;font-weight:normal;">Fred Flintstone</div>
<div class="t" style="left:1673.0px;top:934.2px;font-size:19px;color:#333;font-weight:normal;">Gavin Andrew</div>
<div class="t" style="left:1867.0px;top:934.2px;font-size:19px;color:#333;font-weight:normal;">1254123</div>
<div class="t" style="left:2062.0px;top:934.2px;font-size:19px;color:#333;font-weight:normal;">44</div>
<div class="t" style="left:2150.0px;top:934.2px;font-size:19px;color:#5cb85c;font-weight:normal;">Approved</div>
<div style="position:absolute;left:137px;top:998px;width:2130px;height:80px;background:#fbfbfb;"></div>
<div style="position:absolute;left:137px;top:1077px;width:2130px;height:2px;background:#dfdfdf;"></div>
<svg style="position:absolute;left:158.8px;top:1011.4px;" width="22" height="22" viewBox="0 0 22 22"><path d="M0.3 15 L11.9 3.4 L17.4 8.9 L5.8 20.5 L0.3 20.5 Z" fill="#89898d"/><path d="M12.9 2.4 L14.9 0.4 Q15.7 -0.4 16.5 0.4 L20.4 4.3 Q21.2 5.1 20.4 5.9 L18.4 7.9 Z" fill="#89898d"/><line x1="4.4" y1="13.4" x2="12.2" y2="5.6" stroke="#fbfbfb" stroke-width="0.55" opacity="0.75"/><line x1="2.1" y1="15.3" x2="5.3" y2="18.5" stroke="#fbfbfb" stroke-width="1.1"/></svg>
<svg style="position:absolute;left:186px;top:1011px;" width="22" height="21" viewBox="0 0 22 21"><g fill="#89898d"><path d="M4 0.5 H14.5 L18 4 V9 H4 Z"/><rect x="0" y="9" width="22" height="8.5" rx="1.5"/><rect x="4" y="14" width="14" height="7" rx="1"/></g><rect x="5.3" y="2" width="9.5" height="7" fill="#fbfbfb"/><rect x="5.3" y="15.2" width="11.4" height="4.4" fill="#fbfbfb"/><rect x="18.2" y="10.3" width="1.8" height="1.8" fill="#fbfbfb"/></svg>
<svg style="position:absolute;left:213.2px;top:1012.5px;" width="25" height="20" viewBox="0 0 25 20"><g fill="#89898d"><path d="M20.6 5 Q24.5 7 24.5 10.4 Q24.5 13.5 21.5 15.5 L23 19.5 L18.5 16.8 Q16.5 17.2 14 17 Q11 16.8 9 15.6 Q17 15.2 19.6 10.5 Q20.8 8 20.6 5 Z"/><ellipse cx="9.3" cy="7.2" rx="9" ry="6.6"/><path d="M2.5 11 L1.8 15.5 L7.5 13 Z"/></g></svg>
<div class="t" style="left:524.0px;top:1014.2px;font-size:19px;color:#333;font-weight:normal;">504</div>
<div class="t" style="left:638.5px;top:1014.2px;font-size:19px;color:#333;font-weight:normal;transform:scaleX(1.0420);transform-origin:0 0;">04/01/2026</div>
<div class="t" style="left:780.0px;top:1014.2px;font-size:19px;color:#333;font-weight:normal;">891</div>
<div class="t" style="left:894.0px;top:1014.2px;font-size:19px;color:#333;font-weight:normal;">Flintstone Fred</div>
<div class="t" style="left:894.0px;top:1042.2px;font-size:19px;color:#333;font-weight:normal;">[12]</div>
<div class="t" style="left:1088.0px;top:1014.2px;font-size:19px;color:#333;font-weight:normal;">City of Adelaide</div>
<div class="t" style="left:1088.0px;top:1042.2px;font-size:19px;color:#333;font-weight:normal;">[201]</div>
<div class="t" style="left:1283.0px;top:1014.2px;font-size:19px;color:#333;font-weight:normal;">Building &amp;</div>
<div class="t" style="left:1283.0px;top:1042.2px;font-size:19px;color:#333;font-weight:normal;">Construction On...</div>
<div class="t" style="left:1478.0px;top:1014.2px;font-size:19px;color:#333;font-weight:normal;">Torri Smith</div>
<div class="t" style="left:1673.0px;top:1014.2px;font-size:19px;color:#333;font-weight:normal;">Gavin Andrew</div>
<div class="t" style="left:1867.0px;top:1014.2px;font-size:19px;color:#333;font-weight:normal;"></div>
<div class="t" style="left:2062.0px;top:1014.2px;font-size:19px;color:#333;font-weight:normal;">47.5</div>
<div class="t" style="left:2150.0px;top:1014.2px;font-size:19px;color:#5cb85c;font-weight:normal;">Approved</div>
<div style="position:absolute;left:137px;top:1078px;width:2130px;height:80px;background:#f3fbfb;"></div>
<div style="position:absolute;left:137px;top:1157px;width:2130px;height:2px;background:#dfdfdf;"></div>
<svg style="position:absolute;left:158.8px;top:1091.4px;" width="22" height="22" viewBox="0 0 22 22"><path d="M0.3 15 L11.9 3.4 L17.4 8.9 L5.8 20.5 L0.3 20.5 Z" fill="#89898d"/><path d="M12.9 2.4 L14.9 0.4 Q15.7 -0.4 16.5 0.4 L20.4 4.3 Q21.2 5.1 20.4 5.9 L18.4 7.9 Z" fill="#89898d"/><line x1="4.4" y1="13.4" x2="12.2" y2="5.6" stroke="#f3fbfb" stroke-width="0.55" opacity="0.75"/><line x1="2.1" y1="15.3" x2="5.3" y2="18.5" stroke="#f3fbfb" stroke-width="1.1"/></svg>
<svg style="position:absolute;left:186px;top:1091px;" width="22" height="21" viewBox="0 0 22 21"><g fill="#89898d"><path d="M4 0.5 H14.5 L18 4 V9 H4 Z"/><rect x="0" y="9" width="22" height="8.5" rx="1.5"/><rect x="4" y="14" width="14" height="7" rx="1"/></g><rect x="5.3" y="2" width="9.5" height="7" fill="#f3fbfb"/><rect x="5.3" y="15.2" width="11.4" height="4.4" fill="#f3fbfb"/><rect x="18.2" y="10.3" width="1.8" height="1.8" fill="#f3fbfb"/></svg>
<svg style="position:absolute;left:213.2px;top:1092.5px;" width="25" height="20" viewBox="0 0 25 20"><g fill="#89898d"><path d="M20.6 5 Q24.5 7 24.5 10.4 Q24.5 13.5 21.5 15.5 L23 19.5 L18.5 16.8 Q16.5 17.2 14 17 Q11 16.8 9 15.6 Q17 15.2 19.6 10.5 Q20.8 8 20.6 5 Z"/><ellipse cx="9.3" cy="7.2" rx="9" ry="6.6"/><path d="M2.5 11 L1.8 15.5 L7.5 13 Z"/></g></svg>
<div class="t" style="left:524.0px;top:1094.2px;font-size:19px;color:#333;font-weight:normal;">501</div>
<div class="t" style="left:638.5px;top:1094.2px;font-size:19px;color:#333;font-weight:normal;transform:scaleX(1.0420);transform-origin:0 0;">04/01/2026</div>
<div class="t" style="left:780.0px;top:1094.2px;font-size:19px;color:#333;font-weight:normal;">1339</div>
<div class="t" style="left:894.0px;top:1094.2px;font-size:19px;color:#333;font-weight:normal;">Flintstone Fred</div>
<div class="t" style="left:894.0px;top:1122.2px;font-size:19px;color:#333;font-weight:normal;">[12]</div>
<div class="t" style="left:1088.0px;top:1094.2px;font-size:19px;color:#333;font-weight:normal;">Code House [29]</div>
<div class="t" style="left:1283.0px;top:1094.2px;font-size:19px;color:#333;font-weight:normal;">Building &amp;</div>
<div class="t" style="left:1283.0px;top:1122.2px;font-size:19px;color:#333;font-weight:normal;">Construction On...</div>
<div class="t" style="left:1478.0px;top:1094.2px;font-size:19px;color:#333;font-weight:normal;">Fred Flintstone</div>
<div class="t" style="left:1673.0px;top:1094.2px;font-size:19px;color:#333;font-weight:normal;">Gavin Andrew</div>
<div class="t" style="left:1867.0px;top:1094.2px;font-size:19px;color:#333;font-weight:normal;">1254123</div>
<div class="t" style="left:2062.0px;top:1094.2px;font-size:19px;color:#333;font-weight:normal;">40</div>
<div class="t" style="left:2150.0px;top:1094.2px;font-size:19px;color:#5cb85c;font-weight:normal;">Approved</div>
<div style="position:absolute;left:137px;top:1158px;width:2130px;height:80px;background:#fbfbfb;"></div>
<div style="position:absolute;left:137px;top:1237px;width:2130px;height:2px;background:#dfdfdf;"></div>
<svg style="position:absolute;left:158.8px;top:1171.4px;" width="22" height="22" viewBox="0 0 22 22"><path d="M0.3 15 L11.9 3.4 L17.4 8.9 L5.8 20.5 L0.3 20.5 Z" fill="#89898d"/><path d="M12.9 2.4 L14.9 0.4 Q15.7 -0.4 16.5 0.4 L20.4 4.3 Q21.2 5.1 20.4 5.9 L18.4 7.9 Z" fill="#89898d"/><line x1="4.4" y1="13.4" x2="12.2" y2="5.6" stroke="#fbfbfb" stroke-width="0.55" opacity="0.75"/><line x1="2.1" y1="15.3" x2="5.3" y2="18.5" stroke="#fbfbfb" stroke-width="1.1"/></svg>
<svg style="position:absolute;left:186px;top:1171px;" width="22" height="21" viewBox="0 0 22 21"><g fill="#89898d"><path d="M4 0.5 H14.5 L18 4 V9 H4 Z"/><rect x="0" y="9" width="22" height="8.5" rx="1.5"/><rect x="4" y="14" width="14" height="7" rx="1"/></g><rect x="5.3" y="2" width="9.5" height="7" fill="#fbfbfb"/><rect x="5.3" y="15.2" width="11.4" height="4.4" fill="#fbfbfb"/><rect x="18.2" y="10.3" width="1.8" height="1.8" fill="#fbfbfb"/></svg>
<svg style="position:absolute;left:213.2px;top:1172.5px;" width="25" height="20" viewBox="0 0 25 20"><g fill="#89898d"><path d="M20.6 5 Q24.5 7 24.5 10.4 Q24.5 13.5 21.5 15.5 L23 19.5 L18.5 16.8 Q16.5 17.2 14 17 Q11 16.8 9 15.6 Q17 15.2 19.6 10.5 Q20.8 8 20.6 5 Z"/><ellipse cx="9.3" cy="7.2" rx="9" ry="6.6"/><path d="M2.5 11 L1.8 15.5 L7.5 13 Z"/></g></svg>
<svg style="position:absolute;left:245px;top:1168.5px;" width="14" height="25" viewBox="0 0 14 25"><path d="M12 7.6 C11 5.4 9.3 4.6 7 4.6 C4.2 4.6 2.4 6 2.4 8.3 C2.4 10.8 4.6 11.5 7 12.2 C9.8 13 11.9 13.9 11.9 16.7 C11.9 19.2 9.8 20.6 7 20.6 C4.6 20.6 2.7 19.6 1.6 17.4" fill="none" stroke="#89898d" stroke-width="3.1"/><rect x="5.6" y="0" width="2.8" height="5" fill="#89898d"/><rect x="5.6" y="20" width="2.8" height="5" fill="#89898d"/></svg>
<svg style="position:absolute;left:426px;top:1170px;" width="30" height="30" viewBox="0 0 30 30"><circle cx="15.0" cy="15.0" r="12" fill="none" stroke="#f0ac10" stroke-width="4"/><path d="M16.0 9.0 V17.0 H11.0" fill="none" stroke="#f0ac10" stroke-width="2.2"/></svg>
<div class="t" style="left:524.0px;top:1174.2px;font-size:19px;color:#333;font-weight:normal;">500</div>
<div class="t" style="left:638.5px;top:1174.2px;font-size:19px;color:#333;font-weight:normal;transform:scaleX(1.0420);transform-origin:0 0;">04/01/2026</div>
<div class="t" style="left:780.0px;top:1174.2px;font-size:19px;color:#333;font-weight:normal;">1349</div>
<div class="t" style="left:894.0px;top:1174.2px;font-size:19px;color:#333;font-weight:normal;">Flintstone Fred</div>
<div class="t" style="left:894.0px;top:1202.2px;font-size:19px;color:#333;font-weight:normal;">[12]</div>
<div class="t" style="left:1088.0px;top:1174.2px;font-size:19px;color:#333;font-weight:normal;">Code House [29]</div>
<div class="t" style="left:1283.0px;top:1174.2px;font-size:19px;color:#333;font-weight:normal;">Building &amp;</div>
<div class="t" style="left:1283.0px;top:1202.2px;font-size:19px;color:#333;font-weight:normal;">Construction On...</div>
<div class="t" style="left:1478.0px;top:1174.2px;font-size:19px;color:#333;font-weight:normal;">Fred Flintstone</div>
<div class="t" style="left:1673.0px;top:1174.2px;font-size:19px;color:#333;font-weight:normal;">Gavin Andrew</div>
<div class="t" style="left:1867.0px;top:1174.2px;font-size:19px;color:#333;font-weight:normal;">1254123</div>
<div class="t" style="left:2062.0px;top:1174.2px;font-size:19px;color:#333;font-weight:normal;">39.6</div>
<div class="t" style="left:2150.0px;top:1174.2px;font-size:19px;color:#5cb85c;font-weight:normal;">Approved</div>
<div style="position:absolute;left:137px;top:1239px;width:2130px;height:3px;background:#f3fbfb;"></div>
<div style="position:absolute;left:276px;top:598px;width:2px;height:644px;background:#dfdfdf;"></div>
<div style="position:absolute;left:343px;top:598px;width:2px;height:644px;background:#dfdfdf;"></div>
<div style="position:absolute;left:410px;top:598px;width:2px;height:644px;background:#dfdfdf;"></div>
<div style="position:absolute;left:506px;top:598px;width:2px;height:644px;background:#dfdfdf;"></div>
<div style="position:absolute;left:620px;top:598px;width:2px;height:644px;background:#dfdfdf;"></div>
<div style="position:absolute;left:762px;top:598px;width:2px;height:644px;background:#dfdfdf;"></div>
<div style="position:absolute;left:876px;top:598px;width:2px;height:644px;background:#dfdfdf;"></div>
<div style="position:absolute;left:1070px;top:598px;width:2px;height:644px;background:#dfdfdf;"></div>
<div style="position:absolute;left:1265px;top:598px;width:2px;height:644px;background:#dfdfdf;"></div>
<div style="position:absolute;left:1460px;top:598px;width:2px;height:644px;background:#dfdfdf;"></div>
<div style="position:absolute;left:1655px;top:598px;width:2px;height:644px;background:#dfdfdf;"></div>
<div style="position:absolute;left:1849px;top:598px;width:2px;height:644px;background:#dfdfdf;"></div>
<div style="position:absolute;left:2044px;top:598px;width:2px;height:644px;background:#dfdfdf;"></div>
<div style="position:absolute;left:2132px;top:598px;width:2px;height:644px;background:#dfdfdf;"></div>
</div></body></html>
